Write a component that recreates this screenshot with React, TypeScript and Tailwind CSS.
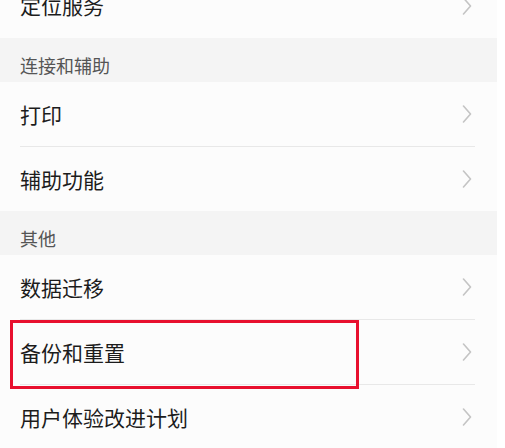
import React from 'react';

const font = { fontFamily: '"Noto Sans CJK SC", "Noto Sans", sans-serif' };

function Chevron() {
  return (
    <svg width="10" height="18" viewBox="0 0 10 18" fill="none" className="shrink-0">
      <polyline points="1.5,1 8.5,9 1.5,17" stroke="#c4c4c4" strokeWidth="1.6" strokeLinecap="round" strokeLinejoin="round" />
    </svg>
  );
}

function Row({ label, divider = true, boxed = false, h = 'h-[64px]' }: { label: string; divider?: boolean; boxed?: boolean; h?: string }) {
  return (
    <div className="relative">
      <div className={`${h} flex items-center justify-between pl-[20px] pr-[25px] bg-[#fcfcfc]`}>
        <span className="text-[21px] leading-none text-[#1c1c1c]">{label}</span>
        <Chevron />
      </div>
      {divider && (
        <div className="bg-[#fcfcfc] pl-[20px] pr-[22px]">
          <div className="h-px bg-[#e8e8e8]" />
        </div>
      )}
      {boxed && (
        <div className="absolute left-[10px] top-0 z-10 w-[349px] h-[69px] border-[3px] border-[#e8102e] pointer-events-none" />
      )}
    </div>
  );
}

function Header({ title }: { title: string }) {
  return (
    <div className="h-[44px] pt-[10px] pl-[20px] flex items-center bg-[#f4f4f4]">
      <span className="text-[18px] leading-none text-[#555555]">{title}</span>
    </div>
  );
}

export default function App() {
  return (
    <div className="w-[505px] h-[448px] overflow-hidden bg-white" style={font}>
      <div className="w-[497px] -mt-[27px]">
        <Row label="定位服务" divider={false} h="h-[65px]" />
        <Header title="连接和辅助" />
        <Row label="打印" />
        <Row label="辅助功能" divider={false} />
        <Header title="其他" />
        <Row label="数据迁移" />
        <Row label="备份和重置" boxed />
        <Row label="用户体验改进计划" divider={false} />
      </div>
    </div>
  );
}
